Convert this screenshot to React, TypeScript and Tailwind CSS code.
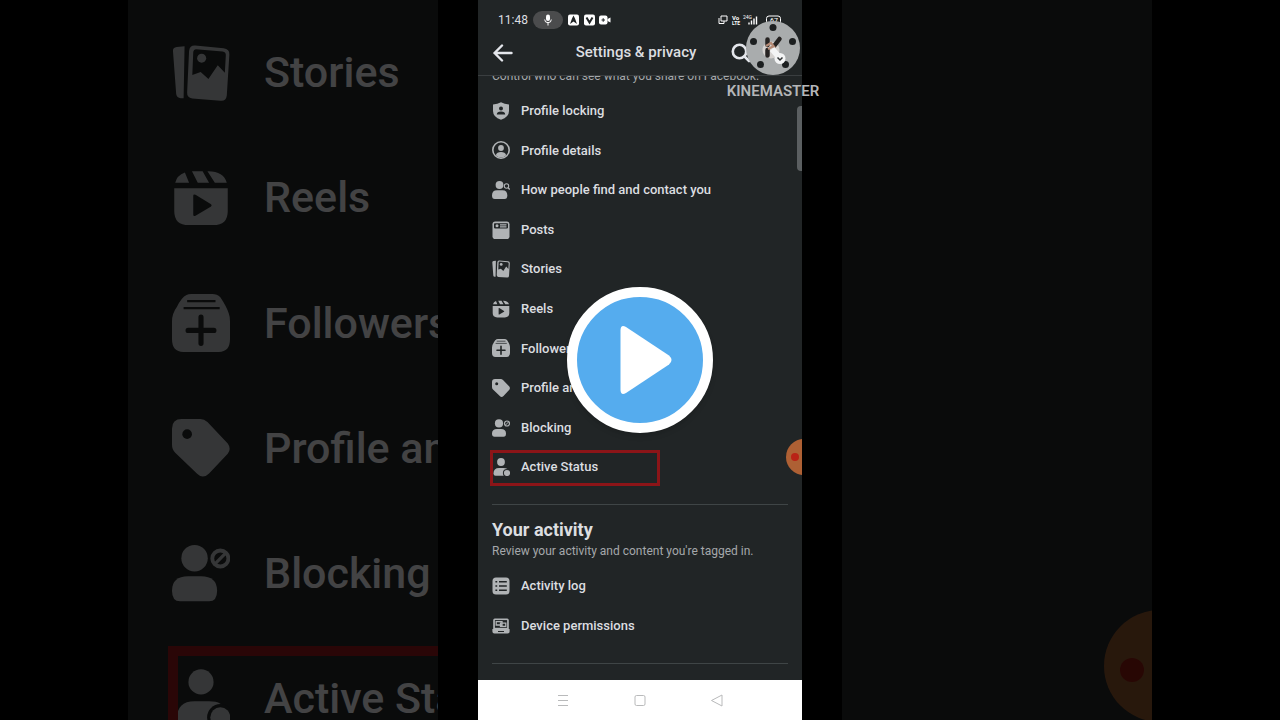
import React from 'react';

type IconName =
    | 'lock' | 'details' | 'find' | 'posts' | 'stories' | 'reels' | 'followers'
    | 'tag' | 'blocking' | 'active' | 'log' | 'device';

interface Item {
    icon: IconName;
    label: string;
}

const audienceItems: Item[] = [
    { icon: 'lock', label: 'Profile locking' },
    { icon: 'details', label: 'Profile details' },
    { icon: 'find', label: 'How people find and contact you' },
    { icon: 'posts', label: 'Posts' },
    { icon: 'stories', label: 'Stories' },
    { icon: 'reels', label: 'Reels' },
    { icon: 'followers', label: 'Followers and public content' },
    { icon: 'tag', label: 'Profile and tagging' },
    { icon: 'blocking', label: 'Blocking' },
    { icon: 'active', label: 'Active Status' },
];

const activityItems: Item[] = [
    { icon: 'log', label: 'Activity log' },
    { icon: 'device', label: 'Device permissions' },
];

// cut-outs are painted in the panel colour
const HOLE = '#212526';

const glyphs: Record<IconName, React.ReactNode> = {
    lock: (
        <>
            <path d="M9 0.3 Q12.5 2.3 17 2.6 V9 Q17 15 9 17.8 Q1 15 1 9 V2.6 Q5.5 2.3 9 0.3Z" />
            <circle cx="9" cy="6.5" r="2" fill={HOLE} />
            <path d="M4.8 12.5 Q4.8 9.6 9 9.6 Q13.2 9.6 13.2 12.5Z" fill={HOLE} />
        </>
    ),
    details: (
        <>
            <circle cx="9" cy="9" r="8.2" fill="none" stroke="currentColor" strokeWidth="1.6" />
            <circle cx="9" cy="7" r="2.9" />
            <path d="M3.8 14.2 Q4.8 11 9 11 Q13.2 11 14.2 14.2 Q12 16.5 9 16.5 Q6 16.5 3.8 14.2Z" />
        </>
    ),
    find: (
        <>
            <circle cx="7.5" cy="4" r="3.9" />
            <path d="M0 14.5 Q0 9.3 5 9.3 H10.5 Q15.3 9.3 15.3 14.5 Q15.3 18 12.5 18 H2.8 Q0 18 0 14.5Z" />
            <circle cx="14.5" cy="5" r="2.2" fill={HOLE} stroke="currentColor" strokeWidth="1.1" />
            <path d="M16.1 6.7 L17.8 8.5" stroke="currentColor" strokeWidth="1.3" />
        </>
    ),
    posts: (
        <>
            <rect x="0.5" y="0.5" width="17" height="17.5" rx="2.8" />
            <rect x="2" y="2.2" width="14" height="5.2" rx="0.8" fill={HOLE} />
            <circle cx="5" cy="4.8" r="1.5" />
            <path d="M8 3.9 H14.5 M8 5.9 H14.5" stroke="currentColor" strokeWidth="1.2" />
        </>
    ),
    stories: (
        <>
            <path d="M0.3 2.2 Q0.2 1 1.5 0.9 L3.9 0.7 L3.6 16.8 H2.7 Q1.5 16.7 1.3 15.5Z" />
            <path d="M7.2 0.5 L16 1.3 Q17.9 1.5 17.8 3.3 L17 16 Q16.8 17.8 15 17.6 L6.3 16.9 Q4.6 16.7 4.7 15 L5.3 2.2 Q5.5 0.4 7.2 0.5Z" />
            <path d="M7.4 1.6 L15.7 2.3 Q16.8 2.4 16.7 3.6 L16.4 8.9 L14.2 6.6 L11.3 10.9 L8.9 8.7 L6.3 9.6 L6.6 2.4 Q6.7 1.6 7.4 1.6Z" fill={HOLE} />
            <circle cx="9.200" cy="4.400" r="1.400" />
        </>
    ),
    reels: (
        <>
            <path d="M1 4.3 Q1.5 2 4 1.1 L5.3 4.3Z M6.2 0.7 H9.5 L11.5 4.3 H8Z M11 0.7 Q16 0.6 17 4.3 H13.3Z" />
            <path d="M0.7 6 H17.3 V13 Q17.3 17.4 12.8 17.4 H5.2 Q0.7 17.4 0.7 13Z" />
            <path d="M6.6 8.3 Q6.6 7.7 7.3 8 L12 10.9 Q12.6 11.3 12 11.7 L7.3 14.5 Q6.6 14.8 6.6 14.2Z" fill={HOLE} />
        </>
    ),
    followers: (
        <>
            <path d="M4.5 0.3 Q5 0 6 0 H12.5 Q14 0 15 1 Q17 4 17.6 6 Q18 7 18 8.5 V14 Q18 18 14.5 18 H3.5 Q0 18 0 14 V8.5 Q0 6 1.5 4 Q3 1 4.5 0.3Z" />
            <path d="M4.7 2.2 H13.5 M3.6 4.4 H14.8" stroke={HOLE} strokeWidth="0.7" />
            <path d="M9 7.2 V15.3 M5 11.3 H13" stroke={HOLE} strokeWidth="1.6" strokeLinecap="round" />
        </>
    ),
    tag: (
        <>
            <path d="M3 0 H8.8 Q10 0 11 0.9 L17.3 7.6 Q18.5 9.2 17.3 10.8 L11.5 16.9 Q9.6 18.8 7.8 17 L1 10.5 Q0 9.5 0 8 V3 Q0 0 3 0Z" />
            <circle cx="4.7" cy="4.7" r="1.5" fill={HOLE} />
        </>
    ),
    blocking: (
        <>
            <circle cx="7" cy="4.4" r="4.1" />
            <path d="M0 14.5 Q0 10 5 10 H9 Q14 10 14 14.5 Q14 17.8 11.5 17.8 H2.5 Q0 17.8 0 14.5Z" />
            <circle cx="15" cy="4.5" r="2.5" fill="none" stroke="currentColor" strokeWidth="1.2" />
            <path d="M13.5 6 L16.5 3" stroke="currentColor" strokeWidth="1" />
        </>
    ),
    active: (
        <>
            <circle cx="9" cy="4" r="3.9" />
            <path d="M1.5 15.5 Q1.5 10 7 10 H11.5 Q16 10 16.5 13 V17.8 H3.5 Q1.5 17.8 1.5 15.5Z" />
            <circle cx="15" cy="15" r="4.1" fill={HOLE} />
            <circle cx="15" cy="15" r="3.1" />
        </>
    ),
    log: (
        <>
            <rect x="0.5" y="0.5" width="17" height="17" rx="3.5" />
            <path d="M3.4 4.8 H5.2 M7 4.8 H14.8 M3.4 9 H5.2 M7 9 H14.8 M3.4 13.2 H5.2 M7 13.2 H14.8" stroke={HOLE} strokeWidth="1.4" />
        </>
    ),
    device: (
        <>
            <path d="M2.8 1.5 H15.2 Q16.8 1.5 16.8 3.2 V12.5 H1.2 V3.2 Q1.2 1.5 2.8 1.5Z M0.4 12 H17.6 V14.5 Q17.6 16.5 15.6 16.5 H2.4 Q0.4 16.5 0.4 14.5Z" />
            <path d="M2.9 3.1 H15.1 V10.8 H2.9Z" fill={HOLE} />
            <path d="M4.2 4.7 H10 V8 H4.2Z M8.5 6.1 H13.8 V9.3 H8.5Z" fill="none" stroke="currentColor" strokeWidth="1.3" />
            <path d="M6 14.5 H12" stroke={HOLE} strokeWidth="1" />
        </>
    ),
};

const Icon = ({ name, className }: { name: IconName; className: string }) => (
    <svg viewBox="0 0 18 18" fill="currentColor" aria-hidden="true" className={className}>
        {glyphs[name]}
    </svg>
);

const SettingRow = ({ icon, label }: Item) => (
    <li className="relative flex items-center">
        <a href="#" className="flex items-center gap-[11px] text-[13px] font-medium whitespace-nowrap">
            <Icon name={icon} className="size-[18px] shrink-0 text-[#b0b3b5]" />
            {label}
        </a>
        {icon === 'active' && (
            <span className="absolute top-[3px] -left-[2px] w-[170px] h-9 border-3 border-[#8c1518]" />
        )}
    </li>
);

const ZoomedPanel = () => (
    <aside aria-hidden="true" className="w-[310px] overflow-hidden bg-[#212526] opacity-30">
        <ul className="mt-[10px] ml-11 h-[751px] grid auto-rows-fr">
            {audienceItems.slice(4).map(({ icon, label }) => (
                <li key={icon} className="relative flex items-center gap-[34px] text-[43px] font-medium whitespace-nowrap">
                    <Icon name={icon} className="size-[58px] shrink-0 text-[#b0b3b5]" />
                    {label}
                    {icon === 'active' && (
                        <span className="absolute top-[10px] -left-1 w-[530px] h-28 border-10 border-[#8c1518]" />
                    )}
                </li>
            ))}
        </ul>
    </aside>
);

const StatusBar = () => (
    <div className="h-[30px] pt-[10px] px-5 flex items-center justify-between">
        <div className="flex items-center gap-[5px]">
            <span className="text-[12px]">11:48</span>
            <span className="w-[30px] h-[18px] rounded-full bg-[#4b4c4d] flex items-center justify-center">
                <svg viewBox="0 0 8 12" className="w-2 h-3" fill="#fff">
                    <rect x="2" y="0.5" width="4" height="6.5" rx="2" />
                    <path d="M0.7 5.5 Q0.7 8.7 4 8.7 Q7.3 8.7 7.3 5.5 M4 8.7 V11.5" fill="none" stroke="#fff" />
                </svg>
            </span>
            <svg viewBox="0 0 44 12" className="w-11 h-3" fill="#fff">
                <rect x="0" y="0.5" width="11" height="11" rx="2" />
                <path d="M5.5 1.5 L7 4.5 L9 10 L5.5 7.5 L2 10 L4 4.5Z" fill={HOLE} />
                <rect x="16" y="0.5" width="11" height="11" rx="2" />
                <path d="M18.5 3.5 L21.5 8.5 L24.5 3.5" fill="none" stroke={HOLE} strokeWidth="2" />
                <rect x="31" y="1.5" width="8.5" height="9" rx="2" />
                <path d="M39.5 5 L42.5 3.5 V8.5 L39.5 7Z" />
                <path d="M33.5 6 H37 M35.2 4.2 V7.800" stroke={HOLE} />
            </svg>
        </div>
        <svg viewBox="0 0 64 12" className="w-16 h-3" fill="#fff">
            <path d="M3 2 H9 V7 H3Z M1 4 V9.5 H6 V7" fill="none" stroke="#fff" />
            <text x="14" y="5.5" fontSize="6" fontWeight="700">Vo</text>
            <text x="14" y="11" fontSize="5" fontWeight="700">LTE</text>
            <text x="25" y="5" fontSize="5">24G</text>
            <path d="M31 10.5 V8.5 M33.5 10.5 V6.5 M36 10.5 V4.5 M38.5 10.5 V2.5" stroke="#fff" strokeWidth="1.4" />
            <rect x="48.5" y="2" width="14" height="8" rx="2.5" fill="none" stroke="#fff" />
            <text x="52" y="8.7" fontSize="7">67</text>
        </svg>
    </div>
);

const Header = () => (
    <header className="h-[46px] px-[15px] flex items-center justify-between border-b border-[#3a3e40]">
        <button type="button" aria-label="Back">
            <svg viewBox="0 0 20 18" className="w-5 h-[18px]" fill="none" stroke="#e4e6eb" strokeWidth="2.4" strokeLinecap="round" strokeLinejoin="round">
                <path d="M9 1.5 L1.5 9 L9 16.5 M1.5 9 H18.5" />
            </svg>
        </button>
        <h1 className="pl-7 text-[15px] font-medium">Settings &amp; privacy</h1>
        <button type="button" aria-label="Search" className="mr-9">
            <svg viewBox="0 0 20 20" className="size-5" fill="none" stroke="#e4e6eb" strokeWidth="2.6" strokeLinecap="round">
                <circle cx="8.5" cy="8.5" r="6.7" />
                <path d="M13.5 13.5 L18 18" />
            </svg>
        </button>
    </header>
);

const Watermark = () => (
    <div className="absolute top-[21px] -right-[19px] w-24 flex flex-col items-center text-[#b4b6b8]">
        <svg viewBox="0 0 54 54" className="size-[54px]" aria-hidden="true">
            <circle cx="27" cy="27" r="27" fill="#a9acad" />
            <g fill="#1c1f20">
                <circle cx="27" cy="6.5" r="3.5" />
                <circle cx="7.5" cy="20.5" r="3.5" />
                <circle cx="46.5" cy="20.5" r="3.5" />
                <circle cx="14.5" cy="43.5" r="3.5" />
                <circle cx="39.5" cy="43.5" r="3.5" />
            </g>
            <circle cx="25" cy="29" r="8.5" fill="#d5d2d0" />
            <path d="M21.5 18.500 V24 M33.500 18 L28.500 24.500 M21.500 29 V34.500" stroke="#262322" strokeWidth="4.500" strokeLinecap="round" />
            <path d="M20 25 L25 22 L29 27 M22 28 L28 25" fill="none" stroke="#b58a75" strokeWidth="2.200" />
            <path d="M26 28 L34 37" stroke="#f3f4f5" strokeWidth="6" />
            <circle cx="34" cy="37.5" r="5.5" fill="#f3f4f5" />
            <path d="M31.5 36.5 L34 39 L36.5 36.5" fill="none" stroke="#303334" strokeWidth="1.5" />
        </svg>
        <span className="mt-1 text-[15px] leading-6 font-semibold">KINEMASTER</span>
    </div>
);

const NavBar = () => (
    <nav className="h-10 shrink-0 bg-white flex items-center justify-center gap-[61px] text-[#b9babb]">
        <button type="button" aria-label="Recent apps">
            <svg viewBox="0 0 16 16" className="size-4" fill="none" stroke="currentColor">
                <path d="M3 3.5 H13 M3 8.5 H13 M3 13.5 H13" />
            </svg>
        </button>
        <button type="button" aria-label="Home">
            <svg viewBox="0 0 16 16" className="size-4" fill="none" stroke="currentColor">
                <rect x="3" y="3.5" width="10" height="10" rx="1.5" />
            </svg>
        </button>
        <button type="button" aria-label="Back">
            <svg viewBox="0 0 16 16" className="size-4" fill="none" stroke="currentColor" strokeLinejoin="round">
                <path d="M13 3 V14 L2.5 8.5Z" />
            </svg>
        </button>
    </nav>
);

const Phone = () => (
    <div className="relative w-81 shrink-0 flex flex-col bg-[#212526]">
        <StatusBar />
        <Header />
        <main className="relative flex-1 min-h-0 overflow-hidden px-[14px]">
            <p className="-mt-2 text-[12px] leading-4 whitespace-nowrap text-[#a5a8ab]">
                Control who can see what you share on Facebook.
            </p>
            <ul className="mt-[7px] h-[396px] grid auto-rows-fr">
                {audienceItems.map((item) => <SettingRow key={item.label} {...item} />)}
            </ul>
            <hr className="mt-[17px] border-[#3f4546]" />
            <h2 className="mt-[13px] text-[18px] leading-6 font-bold">Your activity</h2>
            <p className="mt-px text-[12px] leading-4 whitespace-nowrap text-[#a5a8ab]">
                Review your activity and content you're tagged in.
            </p>
            <ul className="mt-[7px] h-20 grid auto-rows-fr">
                {activityItems.map((item) => <SettingRow key={item.label} {...item} />)}
            </ul>
            <hr className="mt-[17px] border-[#3f4546]" />
            <span className="absolute top-[30px] right-0 w-[5px] h-[65px] rounded-l bg-[#5b5f61]" />
            <span className="absolute top-[363px] -right-5 size-9 rounded-full bg-[#ae6034]">
                <span className="absolute top-[14px] left-[5px] size-2 rounded-full bg-[#b92216]" />
            </span>
        </main>
        <NavBar />
        <Watermark />
    </div>
);

const PlayButton = () => (
    <button
        type="button"
        aria-label="Play"
        className="absolute top-1/2 left-1/2 -translate-x-1/2 -translate-y-1/2 size-[146px] rounded-full border-[10px] border-white bg-[#55acee] shadow-md flex items-center justify-center"
    >
        <svg viewBox="0 0 52 70" className="w-[52px] h-[70px] ml-3" fill="#fff">
            <path d="M0.5 5 Q0.8 -1 6 2 L49 30.5 Q54 35 49 39.5 L6 68 Q0.8 71 0.5 65Z" />
        </svg>
    </button>
);

export default function App() {
    return (
        <div className="relative h-screen overflow-hidden bg-black flex justify-center gap-10 font-[Roboto,sans-serif] text-[#dcdee0]">
            <ZoomedPanel />
            <Phone />
            <aside className="relative w-[310px] overflow-hidden bg-[#212526] opacity-30">
                <span className="absolute top-[610px] -right-16 size-28 rounded-full bg-[#86502a]">
                    <span className="absolute top-12 left-4 size-6 rounded-full bg-[#86170f]" />
                </span>
            </aside>
            <PlayButton />
        </div>
    );
}
